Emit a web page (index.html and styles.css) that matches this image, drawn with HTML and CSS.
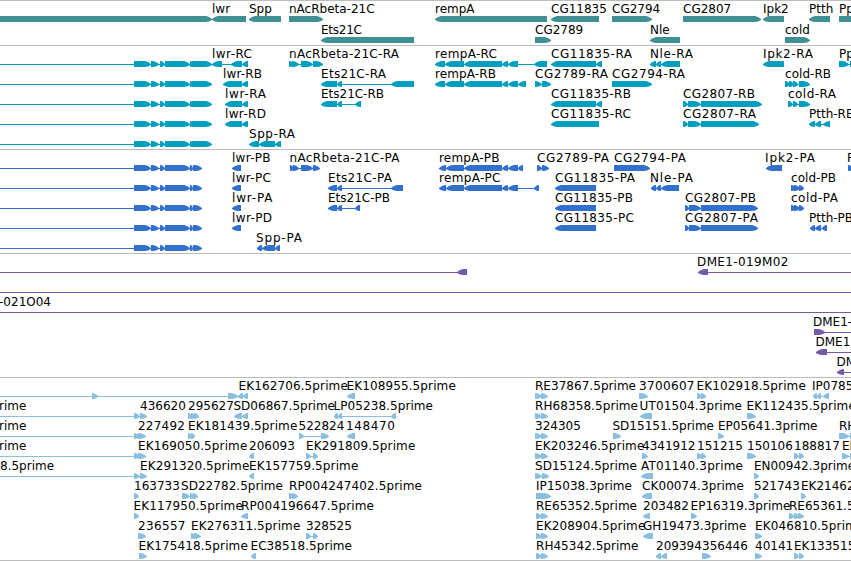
FILE: index.html
```html
<!DOCTYPE html>
<html lang="en">
<head>
    <meta charset="UTF-8">
    <title>Genome Browser</title>
    <link rel="stylesheet" href="styles.css">
</head>
<body>
    <main class="browser">
        <svg class="track genes" id="genes"></svg>
        <svg class="track transcripts" id="transcripts"></svg>
        <svg class="track proteins" id="proteins"></svg>
        <svg class="track bacs" id="bacs"></svg>
        <svg class="track ests" id="ests"></svg>
    </main>
    <script src="tracks.js"></script>
</body>
</html>
```
FILE: styles.css
```css
*{
    margin: 0;
    padding: 0;
    box-sizing: border-box;
}

body{
    background-color: #fff;
    overflow: hidden;
}

.browser{
    display: flex;
    flex-direction: column;
    width: 851px;
    height: 561px;
    border-bottom: 1px solid #bcbcbc;
}

.track{
    display: block;
    flex: none;
    width: 100%;
    border-top: 1px solid #bcbcbc;
    overflow: hidden;
}

.genes{
    height: 45px;
    color: #408f94;
}

.transcripts{
    height: 104px;
    color: #009fc0;
}

.proteins{
    height: 104px;
    color: #3270cd;
}

.bacs{
    height: 124px;
    color: #7459ab;
}

.ests{
    height: 183px;
    color: #8abfe0;
}

.label{
    font-family: "DejaVu Sans", sans-serif;
    font-size: 12px;
    fill: #000;
}

.block{
    fill: currentColor;
}

.intron{
    fill: currentColor;
    shape-rendering: crispEdges;
}
```
FILE: tracks.js
```js
// feature: [row, label, strand, blocks, labelX, line range]
const cds = "134-151 151-159 160-165 165-190 190-193 193-202";
const exons = "134-151 151-159 160-165 165-190 190-193 192-212";

const tracks = {
    genes: [
        [0, "", ">", "-20-212"],
        [0, "lwr", "<", "212-246"],
        [0, "Spp", "<", "249-281"],
        [0, "nAcRbeta-21C", ">", "289-323"],
        [0, "rempA", "<", "435-547"],
        [0, "CG11835", "<", "551-599"],
        [0, "CG2794", ">", "612-652"],
        [0, "CG2807", ">", "683-761"],
        [0, "Ipk2", "<", "763-784"],
        [0, "Ptth", "<", "809-830"],
        [0, "Pp", ">", "839-870"],
        [1, "Ets21C", "<", "321-414"],
        [1, "CG2789", ">", "535-551"],
        [1, "Nle", "<", "650-680"],
        [1, "cold", ">", "785-810"]
    ],
    transcripts: [
        [0, "", ">", exons, 0, [-10, 212]],
        [1, "", ">", exons, 0, [-10, 212]],
        [2, "", ">", exons, 0, [-10, 212]],
        [3, "", ">", exons, 0, [-10, 212]],
        [4, "", ">", exons, 0, [-10, 212]],
        [0, "lwr-RC", "<", "212-222 231-242 242-248"],
        [1, "lwr-RB", "<", "223-242 242-248"],
        [2, "lwr-RA", "<", "225-242 242-248"],
        [3, "lwr-RD", "<", "225-242 242-248"],
        [4, "Spp-RA", "<", "249-259 259-275 275-281"],
        [0, "nAcRbeta-21C-RA", ">", "289-293 292-299 301-313 313-323"],
        [1, "Ets21C-RA", "<", "321-337 337-342 391-414"],
        [2, "Ets21C-RB", "<", "321-337 337-342 355-361"],
        [0, "rempA-RC", "<", "435-445 445-464 464-502 502-508 508-518 534-547"],
        [1, "rempA-RB", "<", "435-445 445-464 464-502 502-508 508-518 518-526"],
        [1, "CG2789-RA", ">", "535-542 542-551"],
        [0, "CG11835-RA", "<", "551-596 596-602"],
        [2, "CG11835-RB", "<", "551-596 596-602"],
        [3, "CG11835-RC", "<", "551-599"],
        [1, "CG2794-RA", ">", "612-652"],
        [0, "Nle-RA", "<", "650-656 656-661 661-680"],
        [2, "CG2807-RB", ">", "683-688 688-701 701-762"],
        [3, "CG2807-RA", ">", "683-688 688-701 701-759"],
        [0, "Ipk2-RA", "<", "763-784"],
        [1, "cold-RB", ">", "785-790 789-794 793-798 799-810"],
        [2, "cold-RA", ">", "788-793 793-798 799-810"],
        [3, "Ptth-RB", "<", "809-815 815-821 823-830"],
        [0, "Pp", ">", "839-849 850-870"]
    ],
    proteins: [
        [0, "", ">", cds, 0, [-10, 201]],
        [1, "", ">", cds, 0, [-10, 201]],
        [2, "", ">", cds, 0, [-10, 201]],
        [3, "", ">", cds, 0, [-10, 201]],
        [4, "", ">", cds, 0, [-10, 201]],
        [0, "lwr-PB", "<", "232-241"],
        [1, "lwr-PC", "<", "232-241"],
        [2, "lwr-PA", "<", "232-241"],
        [3, "lwr-PD", "<", "232-241"],
        [4, "Spp-PA", "<", "257-262 262-275 275-280", 256],
        [0, "nAcRbeta-21C-PA", ">", "290-294 293-299 301-313 313-320", 289.5],
        [1, "Ets21C-PA", "<", "328-337 337-342 391-403"],
        [2, "Ets21C-PB", "<", "328-337 337-342 355-360"],
        [0, "rempA-PB", "<", "439-446 446-464 464-502 502-508 508-518 518-523"],
        [1, "rempA-PC", "<", "439-446 446-464 464-502 502-508 508-518 534-539"],
        [0, "CG2789-PA", ">", "537-542 542-549"],
        [1, "CG11835-PA", "<", "555-596"],
        [2, "CG11835-PB", "<", "555-596"],
        [3, "CG11835-PC", "<", "555-596"],
        [0, "CG2794-PA", ">", "614-650"],
        [1, "Nle-PA", "<", "651-656 656-661 661-679", 650],
        [2, "CG2807-PB", ">", "685-689 689-701 701-758"],
        [3, "CG2807-PA", ">", "685-689 689-701 701-758"],
        [0, "Ipk2-PA", "<", "766-782", 765],
        [1, "cold-PB", ">", "791-796 794-800 799-804"],
        [2, "cold-PA", ">", "791-796 794-800 799-804"],
        [3, "Ptth-PB", "<", "810-815 815-821 822-827", 809],
        [0, "P", ">", "848-853", 847]
    ],
    bacs: [
        [0, "", "<", "457-467", 0, [-10, 467]],
        [0, "DME1-019M02", "<", "698-708", 697, [698, 870]],
        [1, "", "<", "", 0, [-10, 870]],
        [2, "-021O04", "<", "", -1, [-10, 870]],
        [3, "DME1-", ">", "814-825", 813, [814, 870]],
        [4, "DME1", "<", "816-827", 815.5, [816, 870]],
        [5, "DM", "<", "837-844", 836.5, [837, 870]]
    ],
    ests: [
        [0, "", ">", "92-98 228-238", 0, [-10, 238]],
        [0, "EK162706.5prime", "<", "238-243 243-248", 238.5],
        [0, "EK108955.5prime", "<", "347-355", 346.5],
        [0, "RE37867.5prime", ">", "535-542 541-548"],
        [0, "3700607", ">", "639-648"],
        [0, "EK102918.5prime", ">", "697-702 701-706", 696.5],
        [0, "IP0785", "<", "813-817 817-821 823-829", 812],

        [1, "rime", ">", "134-140 140-147", -1, [-10, 147]],
        [1, "436620", ">", "", 140],
        [1, "295627", ">", "188-192 191-195 194-199"],
        [1, "SD06867.5prime", "<", "234-242 242-248", 233.5],
        [1, "LP05238.5prime", "<", "334-338 338-342 391-396", 333.5],
        [1, "RH68358.5prime", ">", "535-542 541-548"],
        [1, "UT01504.3prime", "<", "640-652", 639.5],
        [1, "EK112435.5prime", ">", "747-756", 746.5],

        [2, "rime", ">", "134-140 138-146", -1, [-10, 146]],
        [2, "227492", ">", "", 138],
        [2, "EK181439.5prime", ">", "188-192 191-195"],
        [2, "522824", ">", "299-304 321-329", 298.5],
        [2, "148470", "<", "347-355", 346],
        [2, "324305", ">", "535-542 541-548"],
        [2, "SD15151.5prime", ">", "613-621", 612.5],
        [2, "EP05641.3prime", ">", "718-724"],
        [2, "RH", ">", "839-849 850-870"],

        [3, "rime", ">", "134-140 138-146", -1, [-10, 146]],
        [3, "EK169050.5prime", ">", "", 138],
        [3, "206093", "<", "249-254"],
        [3, "EK291809.5prime", ">", "306-311 313-318"],
        [3, "EK203246.5prime", ">", "535-542 541-548"],
        [3, "4341912", ">", "642-648"],
        [3, "151215", ">", "697-702 701-706"],
        [3, "150106", ">", "747-756"],
        [3, "188817", ">", "794-799 799-804"],
        [3, "EK", ">", "842-849 850-870"],

        [4, "8.5prime", ">", "134-140 140-147", 0, [-10, 147]],
        [4, "EK291320.5prime", ">", "", 140],
        [4, "EK157759.5prime", "<", "249-254"],
        [4, "SD15124.5prime", ">", "535-542 542-549"],
        [4, "AT01140.3prime", "<", "641-653"],
        [4, "EN00942.3prime", ">", "754-759"],

        [5, "163733", ">", "134-139"],
        [5, "SD22782.5prime", ">", "182-190 190-194 193-198", 181],
        [5, "RP004247402.5prime", ">", "289-293 292-298"],
        [5, "IP15038.3prime", ">", "536-551"],
        [5, "CK00074.3prime", "<", "642-652"],
        [5, "521743", ">", "754-759"],
        [5, "EK21462", ">", "801-806"],

        [6, "EK117950.5prime", ">", "134-139", 133.5],
        [6, "RP004196647.5prime", "<", "241-248"],
        [6, "RE65352.5prime", ">", "536-542 541-548"],
        [6, "203482", "<", "643-650"],
        [6, "EP16319.3prime", ">", "691-697", 690.5],
        [6, "RE65361.5", ">", "789-794 794-799 798-804"],

        [7, "236557", ">", "138-146"],
        [7, "EK276311.5prime", ">", "191-195 194-201"],
        [7, "328525", ">", "306-311 313-318"],
        [7, "EK208904.5prime", ">", "536-542 541-548"],
        [7, "GH19473.3prime", "<", "643-653"],
        [7, "EK046810.5prime", ">", "755-762"],

        [8, "EK175418.5prime", ">", "139-147", 138.5],
        [8, "EC38518.5prime", "<", "251-256", 250.5],
        [8, "RH45342.5prime", ">", "536-542 541-548"],
        [8, "209394", "<", "656-661 661-667"],
        [8, "356446", ">", "702-711"],
        [8, "40141", ">", "755-762"],
        [8, "EK133515", ">", "794-799 799-804"]
    ]
};

// label widths in px
const widths = {
    "lwr-RC": 40, "lwr-RB": 39, "lwr-RA": 41, "lwr-RD": 41, "Spp-RA": 46,
    "nAcRbeta-21C-RA": 110, "Ets21C-RA": 65, "Ets21C-RB": 63,
    "rempA-RC": 62, "rempA-RB": 61, "CG2789-RA": 73, "CG2794-RA": 73,
    "CG11835-RA": 81, "CG11835-RB": 80, "CG11835-RC": 80, "Nle-RA": 43,
    "CG2807-RB": 72, "CG2807-RA": 73, "Ipk2-RA": 50, "cold-RB": 46, "cold-RA": 48,
    "lwr-PB": 38.5, "lwr-PC": 39, "lwr-PA": 40.5, "lwr-PD": 40, "Spp-PA": 46,
    "nAcRbeta-21C-PA": 110, "Ets21C-PA": 64, "Ets21C-PB": 62,
    "rempA-PB": 60.5, "rempA-PC": 61.5, "CG2789-PA": 72, "CG2794-PA": 72,
    "CG11835-PA": 80, "CG11835-PB": 78, "CG11835-PC": 79, "Nle-PA": 43,
    "CG2807-PB": 71, "CG2807-PA": 73, "Ipk2-PA": 50, "cold-PB": 45, "cold-PA": 47,
    "DME1-019M02": 91.5, "-021O04": 52, "Ets21C": 41, "3700607": 55.5,
    "RE37867.5prime": 101, "SD06867.5prime": 101.5, "LP05238.5prime": 99.5,
    "RH68358.5prime": 103, "UT01504.3prime": 102.5, "SD15151.5prime": 101.5,
    "EP05641.3prime": 99.5, "SD15124.5prime": 102, "AT01140.3prime": 102,
    "SD22782.5prime": 102, "RP004247402.5prime": 133, "IP15038.3prime": 96,
    "CK00074.3prime": 102, "RP004196647.5prime": 133, "RE65352.5prime": 101,
    "EP16319.3prime": 100, "GH19473.3prime": 103.5, "RH45342.5prime": 102.5,
    "EC38518.5prime": 101.5, "148470": 49, "227492": 47, "236557": 47.5
};

function labelWidth(label) {
    if (/^EK.*prime$/.test(label)) return 109.3;
    return widths[label];
}

function add(svg, tag, attrs, text) {
    const el = document.createElementNS("http://www.w3.org/2000/svg", tag);
    for (let key in attrs) {
        el.setAttribute(key, attrs[key]);
    }
    if (text) el.textContent = text;
    svg.appendChild(el);
}

// box with a pointed end on the strand side
function arrow(a, b, y, strand) {
    const head = Math.min(6, b - a - 1);
    const dir = strand === ">" ? 1 : -1;
    const tip = dir > 0 ? b : a;
    const back = dir > 0 ? a : b;
    const neck = tip - dir * head;
    const mid = tip - dir * head * 0.5;
    return `${back},${y} ${neck},${y} ${mid},${y + 1} ${tip},${y + 3} ${tip},${y + 4} ${mid},${y + 5.4} ${neck},${y + 6} ${back},${y + 6}`;
}

for (let id in tracks) {
    const svg = document.getElementById(id);
    const pitch = id === "genes" ? 21 : 20;

    tracks[id].forEach(([row, label, strand, list, labelX, range]) => {
        const y = row * pitch + 15;
        const blocks = (list.match(/-?\d+-\d+/g) || []).map((s) => {
            const m = s.match(/(-?\d+)-(\d+)/);
            return [+m[1], +m[2]];
        });
        if (!range && blocks.length) {
            range = [blocks[0][0], blocks[blocks.length - 1][1]];
        }
        if (range) {
            add(svg, "rect", {class: "intron", x: range[0], y: y + 3, width: range[1] - range[0], height: 1});
        }
        blocks.forEach(([a, b]) => {
            add(svg, "polygon", {class: "block", points: arrow(a, b, y, strand)});
        });
        if (label) {
            const attrs = {class: "label", x: labelX === undefined ? blocks[0][0] : labelX, y: y - 3};
            const width = labelWidth(label);
            if (width) attrs.textLength = width;
            add(svg, "text", attrs, label);
        }
    });
}
```
